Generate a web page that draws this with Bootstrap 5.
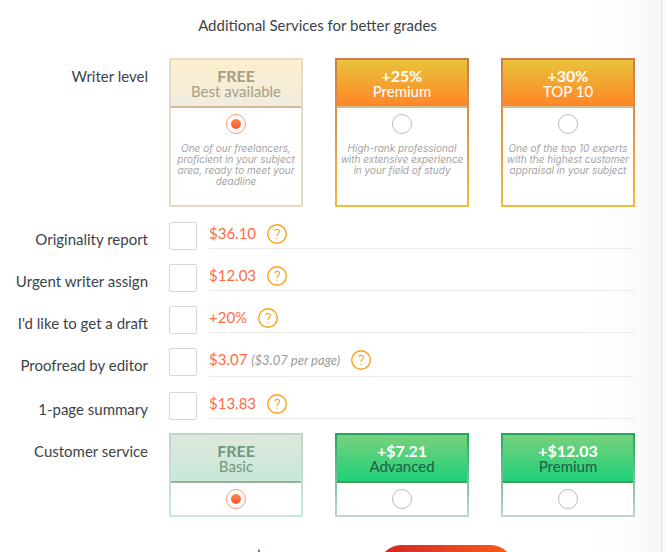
<!DOCTYPE html>
<html lang="en">
<head>
<meta charset="utf-8">
<meta name="viewport" content="width=device-width, initial-scale=1">
<title>Additional Services</title>
<link rel="stylesheet" href="https://cdn.jsdelivr.net/npm/bootstrap@5.3.0/dist/css/bootstrap.min.css">
<style>
body{font:15px/16px Lato,sans-serif;color:#3c4349;background:#f9f9f9}
.panel{margin-right:3px;border-right:1px solid #e2e2e2;padding:17px 26px 0 0;height:100vh;overflow:hidden;background:linear-gradient(to right,#fff 88%,#fdfdfd 94%,#f7f7f7)}
h1{font-size:15px;line-height:16px;font-weight:400;margin:0 0 25px}
.side{flex:0 0 148px;margin-right:21px;text-align:right}
.side-top{padding-top:10px}
.levels{margin-bottom:13px}
.plans{gap:32px}
.plan{flex:1 1 0;border:2px solid;background:#fff;text-align:center;cursor:pointer}
.plan-head{height:48px;padding-top:8px;border-bottom:2px solid #cfbd96;line-height:16px}
.plan-head strong{display:block;font-size:16px;line-height:15px}
.level{min-height:149px}
.level .plan-head{background:linear-gradient(#e9c33a,#ff8628);color:#fff}
.level{border-image:linear-gradient(#cc7a4e,#f0bc3c) 1}
.level.chosen{border-image:none;border-color:#e5dac4}
.level.chosen .plan-head{background:linear-gradient(#fcefcd,#f0ecdf);color:#a79d85}
.service{min-height:84px;border-image:linear-gradient(#1ba861,#bfd8c8) 1}
.service .plan-head{background:linear-gradient(#78d17c,#1fd07a);border-color:#4c9a57;color:#1a6042}
.service .plan-head strong{color:#fff}
.service.chosen{border-image:linear-gradient(#bdd6c7,#c8e8d9) 1}
.service.chosen .plan-head{background:linear-gradient(#dfe8dd,#c7e8d8);border-color:#9baf9b;color:#71997f}
.service.chosen .plan-head strong{color:#71997f}
.plan input{appearance:none;display:block;width:20px;height:20px;margin:6px auto;border:1px solid #bbb;border-radius:50%;background:#fff}
.plan input:checked{border-color:#ff9876;background:#fff}
.plan input:checked::before{content:"";display:block;width:10px;height:10px;margin:4px;border-radius:50%;background:linear-gradient(#ff8548,#ff5330)}
.desc{font:italic 10px/11px Inter,sans-serif;color:#a4a4a4;margin:9px 2px 0}
.extra{height:29px;margin-bottom:13px}
.extra.tall{height:31px}
.extra label{padding-top:11px}
.extra input{appearance:none;flex:none;width:28px;height:28px;margin:2px 12px 0 0;border:1px solid #d3d6db;border-radius:2px;background:#fff}
.price{padding-top:4px;border-bottom:1px solid #ececec;color:#ff6b43;gap:11px;line-height:19px}
.price em{color:#999;font-size:13px}
.help{width:20px;height:20px;padding:0;border:0;background:none}
.help svg{display:block}
.last-extra{margin-bottom:14px}
.total{margin-top:28px;padding-left:251px;gap:114px}
.total-sum{font-size:24px;line-height:30px}
.order{width:134px;height:44px;border:0;border-radius:22px;color:#fff;background:linear-gradient(to right,#d42626,#fa5c16)}
</style>
<script src="https://cdn.jsdelivr.net/npm/bootstrap@5.3.0/dist/js/bootstrap.bundle.min.js"></script>
</head>
<body>
<svg width="0" height="0" class="position-absolute" aria-hidden="true"><symbol id="q" viewBox="0 0 20 20"><circle cx="10" cy="10" r="9.3" fill="none" stroke="#faa21b" stroke-width="1.4"/><path d="M7.6 7.2Q8 5.2 10 5.2Q12.4 5.3 12.4 7.4Q12.4 8.6 11.2 9.5Q10 10.4 10 12M10 13.7V15" fill="none" stroke="#faa21b" stroke-width="1.1"/></symbol></svg>
<main class="panel">
<form>
<h1 class="text-center">Additional Services for better grades</h1>
<div class="levels d-flex" role="group" aria-label="Writer level">
  <div class="side side-top">Writer level</div>
  <div class="plans d-flex flex-grow-1">
    <label class="plan level chosen"><span class="plan-head d-block"><strong>FREE</strong>Best available</span><input type="radio" name="level" checked><span class="desc d-block">One of our freelancers, proficient in your subject area, ready to meet your deadline</span></label>
    <label class="plan level"><span class="plan-head d-block"><strong>+25%</strong>Premium</span><input type="radio" name="level"><span class="desc d-block">High-rank professional with extensive experience in your field of study</span></label>
    <label class="plan level"><span class="plan-head d-block"><strong>+30%</strong>TOP 10</span><input type="radio" name="level"><span class="desc d-block">One of the top 10 experts with the highest customer appraisal in your subject</span></label>
  </div>
</div>
<div class="extra d-flex"><label class="side" for="x1">Originality report</label><input type="checkbox" id="x1"><div class="price d-flex flex-grow-1"><span>$36.10</span><button type="button" class="help" aria-label="Help"><svg width="20" height="20"><use href="#q"/></svg></button></div></div>
<div class="extra d-flex"><label class="side" for="x2">Urgent writer assign</label><input type="checkbox" id="x2"><div class="price d-flex flex-grow-1"><span>$12.03</span><button type="button" class="help" aria-label="Help"><svg width="20" height="20"><use href="#q"/></svg></button></div></div>
<div class="extra d-flex"><label class="side" for="x3">I'd like to get a draft</label><input type="checkbox" id="x3"><div class="price d-flex flex-grow-1"><span>+20%</span><button type="button" class="help" aria-label="Help"><svg width="20" height="20"><use href="#q"/></svg></button></div></div>
<div class="extra tall d-flex"><label class="side" for="x4">Proofread by editor</label><input type="checkbox" id="x4"><div class="price d-flex flex-grow-1"><span>$3.07 <em>($3.07 per page)</em></span><button type="button" class="help" aria-label="Help"><svg width="20" height="20"><use href="#q"/></svg></button></div></div>
<div class="extra last-extra d-flex"><label class="side" for="x5">1-page summary</label><input type="checkbox" id="x5"><div class="price d-flex flex-grow-1"><span>$13.83</span><button type="button" class="help" aria-label="Help"><svg width="20" height="20"><use href="#q"/></svg></button></div></div>
<div class="d-flex" role="group" aria-label="Customer service">
  <div class="side side-top">Customer service</div>
  <div class="plans d-flex flex-grow-1">
    <label class="plan service chosen"><span class="plan-head d-block"><strong>FREE</strong>Basic</span><input type="radio" name="service" checked></label>
    <label class="plan service"><span class="plan-head d-block"><strong>+$7.21</strong>Advanced</span><input type="radio" name="service"></label>
    <label class="plan service"><span class="plan-head d-block"><strong>+$12.03</strong>Premium</span><input type="radio" name="service"></label>
  </div>
</div>
<div class="total d-flex"><span class="total-sum">$</span><button type="submit" class="order" aria-label="Order"></button></div>
</form>
</main>
</body>
</html>
